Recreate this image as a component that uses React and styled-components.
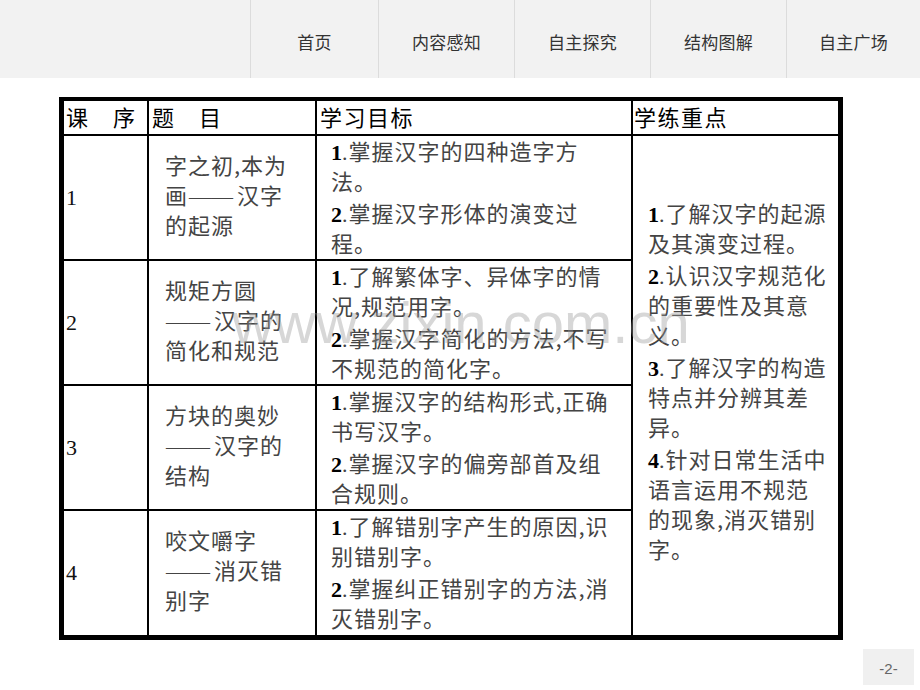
import React from 'react';
import styled, { createGlobalStyle } from 'styled-components';

const GlobalStyle = createGlobalStyle`
  body {
    margin: 0;
    background: #fff;
    font-family: "Noto Sans CJK SC", "Noto Sans", sans-serif;
  }
`;

const Page = styled.div`
  position: relative;
  width: 920px;
  height: 690px;
  overflow: hidden;
  display: flex;
  flex-direction: column;
`;

const NavBar = styled.div`
  display: flex;
  height: 78px;
  padding-left: 250px;
  background: #f2f2f2;
`;

const NavItem = styled.div`
  width: ${(p) => p.$w}px;
  border-left: 1px solid #dcdcdc;
  display: flex;
  align-items: center;
  justify-content: center;
  padding-top: 5px;
  box-sizing: border-box;
  font-size: 17px;
  color: #333;
  letter-spacing: 0.3px;
`;

const Table = styled.div`
  display: grid;
  grid-template-columns: 83px 166px 314px 205px;
  grid-template-rows: 33px 123px 123px 123px 124px;
  gap: 2px;
  width: 784px;
  box-sizing: border-box;
  margin: 19px 0 0 59px;
  padding: 4px 5px 5px 5px;
  background: #000;
`;

const Cell = styled.div`
  background: #fff;
  display: flex;
  flex-direction: column;
  justify-content: center;
  padding-left: ${(p) => p.$pl || 0}px;
  padding-bottom: ${(p) => p.$pb || 0}px;
  grid-row: ${(p) => p.$row || 'auto'};
  grid-column: ${(p) => p.$col || 'auto'};
  white-space: nowrap;
  font-size: 22px;
  line-height: 30px;
  color: #444;
  letter-spacing: 1px;
`;

const HeadCell = styled(Cell)`
  color: #000;
  letter-spacing: 1.5px;
`;

const IndexCell = styled(Cell)`
  font-family: "Liberation Serif", serif;
  color: #111;
  letter-spacing: 0;
`;

const Para = styled.div`
  & + & {
    margin-top: ${(p) => p.$gap ?? 1}px;
  }
`;

const Num = styled.span`
  font-family: "Liberation Serif", serif;
  font-weight: bold;
  line-height: 1;
  color: #000;
  letter-spacing: 0;
`;

const Dot = styled.span`
  font-family: "Liberation Serif", serif;
  line-height: 1;
  letter-spacing: 0;
  margin-right: 1px;
`;

const Dash = styled.span`
  font-family: "Liberation Serif", serif;
  line-height: 1;
  letter-spacing: 0;
  padding: 0 4px 0 1px;
`;

const Watermark = styled.div`
  position: absolute;
  left: 232px;
  top: 294px;
  font-family: "Liberation Sans", Arial, sans-serif;
  font-size: 58px;
  line-height: 58px;
  color: rgba(150, 150, 150, 0.38);
  pointer-events: none;
  white-space: nowrap;
`;

const Footer = styled.div`
  display: flex;
  justify-content: flex-end;
  padding: 9px 6px 0 0;
`;

const PageNo = styled.div`
  width: 51px;
  height: 36px;
  padding-top: 3px;
  box-sizing: border-box;
  background: #f0f0f0;
  color: #666;
  font-family: "Liberation Sans", sans-serif;
  font-size: 15px;
  display: flex;
  align-items: center;
  justify-content: center;
`;

const navs = [
  ['首页', 128],
  ['内容感知', 136],
  ['自主探究', 136],
  ['结构图解', 136],
  ['自主广场', 134],
];

const rows = [
  {
    title: ['字之初,本为', '画|汉字', '的起源'],
    goals: [
      ['1', ['掌握汉字的四种造字方', '法。']],
      ['2', ['掌握汉字形体的演变过', '程。']],
    ],
  },
  {
    title: ['规矩方圆', '|汉字的', '简化和规范'],
    goals: [
      ['1', ['了解繁体字、异体字的情', '况,规范用字。']],
      ['2', ['掌握汉字简化的方法,不写', '不规范的简化字。']],
    ],
  },
  {
    title: ['方块的奥妙', '|汉字的', '结构'],
    goals: [
      ['1', ['掌握汉字的结构形式,正确', '书写汉字。']],
      ['2', ['掌握汉字的偏旁部首及组', '合规则。']],
    ],
  },
  {
    title: ['咬文嚼字', '|消灭错', '别字'],
    goals: [
      ['1', ['了解错别字产生的原因,识', '别错别字。']],
      ['2', ['掌握纠正错别字的方法,消', '灭错别字。']],
    ],
  },
];

const focus = [
  ['1', ['了解汉字的起源', '及其演变过程。']],
  ['2', ['认识汉字规范化', '的重要性及其意', '义。']],
  ['3', ['了解汉字的构造', '特点并分辨其差', '异。']],
  ['4', ['针对日常生活中', '语言运用不规范', '的现象,消灭错别', '字。']],
];

// '|' marks where the long dash goes in a title line
const TitleLine = ({ text }) => {
  const [a, b] = text.split('|');
  if (b === undefined) return <div>{text}</div>;
  return (
    <div>
      {a}
      <Dash>——</Dash>
      {b}
    </div>
  );
};

const Lines = ({ n, lines }) => (
  <>
    {lines.map((l, i) => (
      <div key={i}>
        {i === 0 && (
          <>
            <Num>{n}</Num>
            <Dot>.</Dot>
          </>
        )}
        {l}
      </div>
    ))}
  </>
);

const App = () => {
  return (
    <Page>
      <GlobalStyle />
      <NavBar>
        {navs.map(([t, w]) => (
          <NavItem key={t} $w={w}>{t}</NavItem>
        ))}
      </NavBar>

      <Table>
        <HeadCell $pl={2} $pb={4}>课　序</HeadCell>
        <HeadCell $pl={3} $pb={4}>题　目</HeadCell>
        <HeadCell $pl={3} $pb={4}>学习目标</HeadCell>
        <HeadCell $pl={1} $pb={4}>学练重点</HeadCell>

        {rows.map((r, i) => (
          <React.Fragment key={i}>
            <IndexCell $pl={2} $col={1}>{i + 1}</IndexCell>
            <Cell $pl={16} $pb={8} $col={2}>
              {r.title.map((t) => (
                <TitleLine key={t} text={t} />
              ))}
            </Cell>
            <Cell $pl={14} $pb={4} $col={3}>
              {r.goals.map(([n, lines]) => (
                <Para key={n}>
                  <Lines n={n} lines={lines} />
                </Para>
              ))}
            </Cell>
          </React.Fragment>
        ))}

        <Cell $pl={15} $pb={12} $row="2 / span 4" $col={4}>
          {focus.map(([n, lines]) => (
            <Para key={n} $gap={2}>
              <Lines n={n} lines={lines} />
            </Para>
          ))}
        </Cell>
      </Table>

      <Footer>
        <PageNo>-2-</PageNo>
      </Footer>

      <Watermark>www.zixin.com.cn</Watermark>
    </Page>
  );
};

export default App;
